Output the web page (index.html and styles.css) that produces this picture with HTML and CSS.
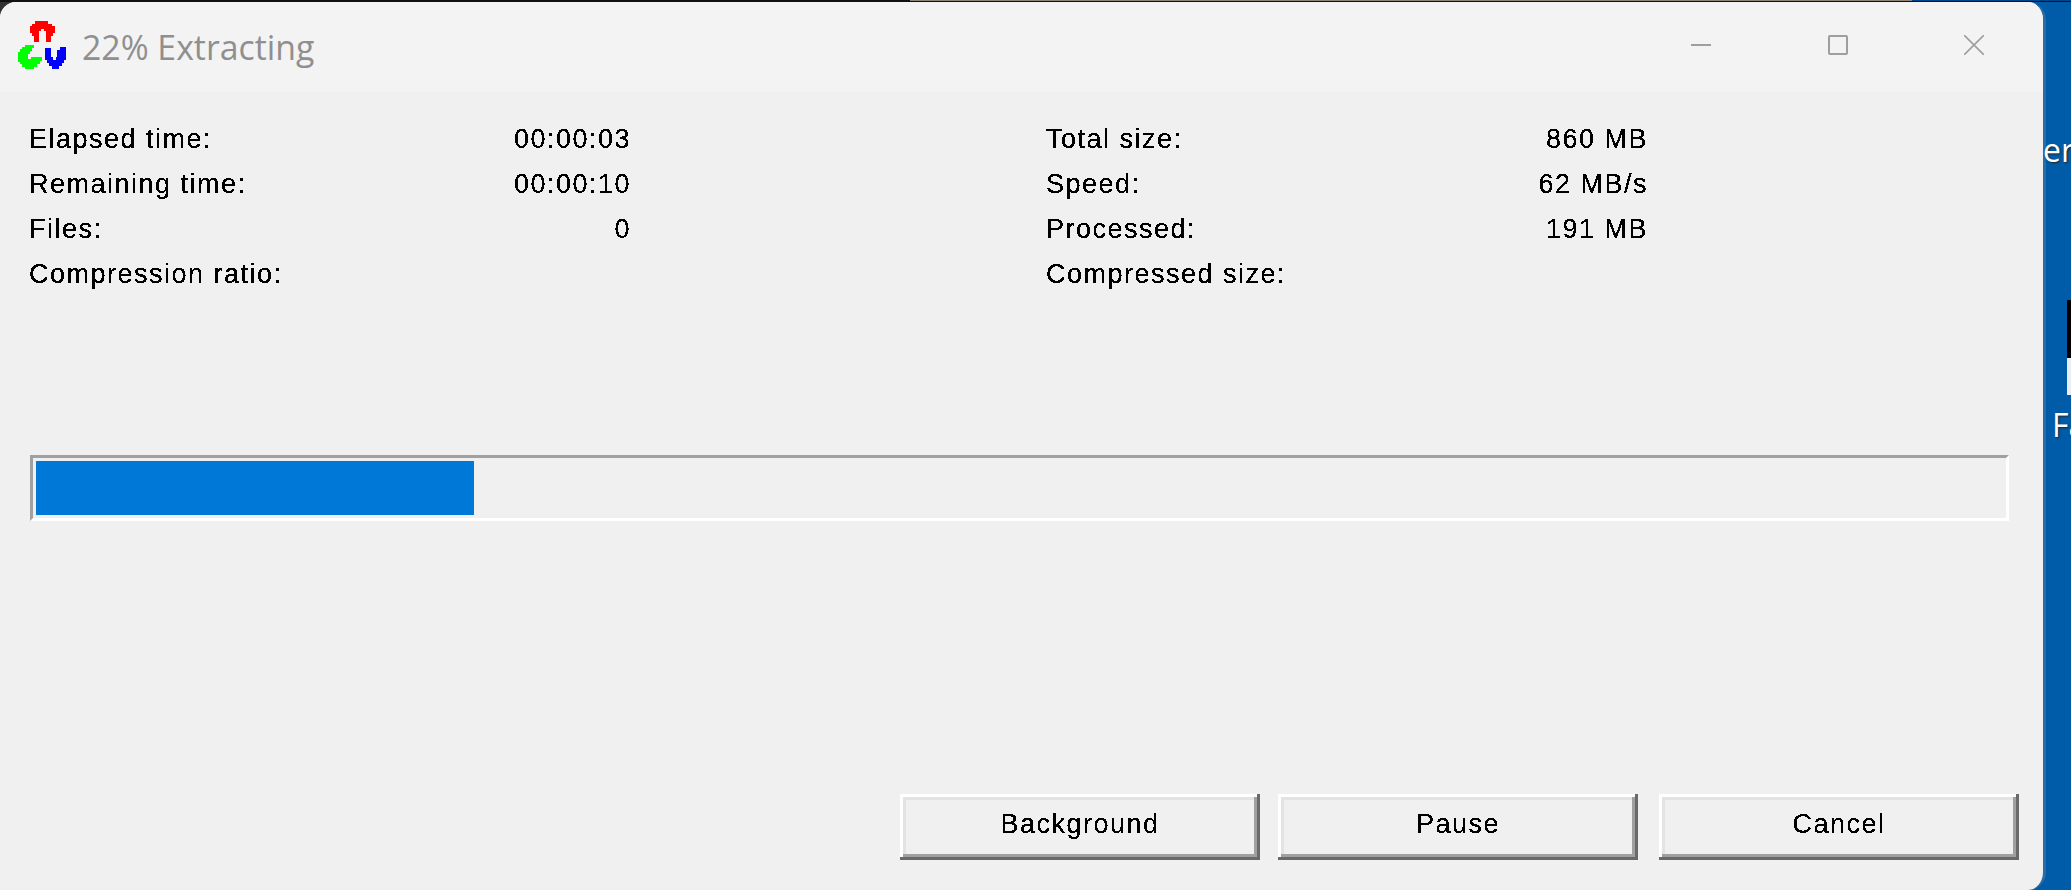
FILE: index.html
```html
<!DOCTYPE html>
<html lang="en">

<head>
  <meta charset="UTF-8">
  <title>22% Extracting</title>
  <link rel="stylesheet" href="styles.css">
</head>

<body>
  <svg class="filter-defs" width="0" height="0" aria-hidden="true">
    <filter id="bitmap-text" color-interpolation-filters="sRGB">
      <feComponentTransfer>
        <feFuncA type="discrete" tableValues="0 1 1" />
      </feComponentTransfer>
    </filter>
  </svg>

  <div class="screen">
    <div class="top-strip"></div>
    <div class="window">
      <header class="titlebar">
        <svg class="app-icon" viewBox="0 0 48 48" shape-rendering="crispEdges" aria-hidden="true">
          <path d="M16 21V15H14V12H12V5H14V3H17V0H30V3H34V5H37V12H35V15H33V21H28V10H26V8H23V10H21V21z" fill="#ff0000" />
          <path d="M7 24H16V27H14V30H12V33H10V38H13V36H24V40H22V43H19V46H16V48H7V46H4V43H2V41H0V31H2V28H4V26H7z" fill="#00ff00" />
          <path d="M27 27H33V36H35V39H38V36H39V29H42V26H48V39H46V42H44V45H41V48H34V45H31V42H29V39H27z" fill="#0000ff" />
        </svg>
        <h1 class="title">22% Extracting</h1>
        <div class="controls">
          <span class="control"><i class="icon-min"></i></span>
          <span class="control"><i class="icon-max"></i></span>
          <span class="control">
            <svg class="icon-close" viewBox="0 0 20 20" aria-hidden="true">
              <path d="M0 0 20 20M20 0 0 20" />
            </svg>
          </span>
        </div>
      </header>

      <main class="content">
        <section class="stats">
          <div class="stat-col">
            <div class="stat"><span class="bm">Elapsed time:</span><span class="bm">00:00:03</span></div>
            <div class="stat"><span class="bm">Remaining time:</span><span class="bm">00:00:10</span></div>
            <div class="stat"><span class="bm">Files:</span><span class="bm">0</span></div>
            <div class="stat"><span class="bm">Compression ratio:</span></div>
          </div>
          <div class="stat-col">
            <div class="stat"><span class="bm">Total size:</span><span class="bm">860 MB</span></div>
            <div class="stat"><span class="bm">Speed:</span><span class="bm">62 MB/s</span></div>
            <div class="stat"><span class="bm">Processed:</span><span class="bm">191 MB</span></div>
            <div class="stat"><span class="bm">Compressed size:</span></div>
          </div>
        </section>

        <div class="progress">
          <div class="progress-fill" style="width: 438px;"></div>
        </div>

        <div class="actions">
          <button class="btn" type="button"><span class="bm">Background</span></button>
          <button class="btn" type="button"><span class="bm">Pause</span></button>
          <button class="btn btn-cancel" type="button"><span class="bm">Cancel</span></button>
        </div>
      </main>
    </div>

    <!-- desktop icons cut off by the screenshot edge -->
    <span class="desk-text desk-er">er</span>
    <span class="desk-text desk-fa">Fa</span>
    <div class="desk-icon"></div>
  </div>
</body>

</html>
```

FILE: styles.css
```css
* {
  box-sizing: border-box;
}

html,
body {
  margin: 0;
  height: 100%;
  overflow: hidden;
}

.filter-defs {
  position: absolute;
}

.screen {
  position: relative;
  width: 2071px;
  height: 890px;
  background: linear-gradient(90deg, #333 0 60px, #005ca8 60px);
}

.top-strip {
  height: 2px;
  background: linear-gradient(90deg, #111 0 910px, #8d8578 910px 1912px, #00458a 1912px);
  border-bottom: 1px solid #111;
}

.window {
  display: flex;
  flex-direction: column;
  width: 2046px;
  height: 888px;
  border-right: 3px solid #2c6ba3;
  border-radius: 0 18px 18px 0;
  border-top-left-radius: 16px;
  background: #f0f0f0;
  overflow: hidden;
  font-family: "Liberation Sans", Arial, sans-serif;
}

.titlebar {
  display: flex;
  align-items: center;
  flex: none;
  height: 90px;
  padding-left: 18px;
  background: #f3f3f3;
}

.app-icon {
  width: 48px;
  height: 48px;
  flex: none;
  margin-bottom: 4px;
}

.title {
  flex: 1;
  margin: 0 0 0 16px;
  font-family: "Open Sans", sans-serif;
  font-size: 33.8px;
  font-weight: 400;
  color: #8f8f8f;
}

.controls {
  display: flex;
}

.control {
  display: flex;
  align-items: center;
  justify-content: center;
  width: 137.5px;
  height: 90px;
  padding-bottom: 4px;
  margin-left: -1px;
}

.icon-min {
  width: 20px;
  height: 2px;
  background: #9e9e9e;
}

.icon-max {
  width: 20px;
  height: 20px;
  border: 2px solid #9e9e9e;
  border-radius: 2px;
}

.icon-close {
  width: 20px;
  height: 20px;
  fill: none;
  stroke: #9e9e9e;
  stroke-width: 1.6;
}

.content {
  display: flex;
  flex-direction: column;
  flex: 1;
  padding: 25px 24px 0 29px;
}

.stats {
  display: grid;
  grid-template-columns: 602px 602px;
  column-gap: 415px;
}

.stat {
  display: flex;
  align-items: center;
  justify-content: space-between;
  height: 45px;
  font-size: 27px;
  color: #000;
}

/* the original uses a non antialiased bitmap font */
.bm {
  filter: url(#bitmap-text);
  letter-spacing: 1.5px;
}

.progress {
  height: 66px;
  margin: 158px 10px 0 1px;
  padding: 3px;
  border: 3px solid;
  border-color: #a0a0a0 #fff #fff #a0a0a0;
  background: #f0f0f0;
}

.progress-fill {
  height: 100%;
  background: #0078d7;
}

.actions {
  display: flex;
  justify-content: flex-end;
  gap: 18px;
  margin-top: 273px;
}

.btn {
  width: 360px;
  height: 66px;
  padding: 0 0 6px;
  border: 0;
  background: #f0f0f0;
  box-shadow:
    inset -3px -3px #696969,
    inset 3px 3px #fff,
    inset -6px -6px #a0a0a0,
    inset 6px 6px #e3e3e3;
  font-family: "Liberation Sans", Arial, sans-serif;
  font-size: 27px;
  color: #000;
}

.btn-cancel {
  margin-left: 3px;
}

.desk-text {
  position: absolute;
  font-family: "Open Sans", sans-serif;
  font-size: 32px;
  color: #fff;
  text-shadow: 1px 1px 2px #222;
}

.desk-er {
  top: 128px;
  left: 2043px;
}

.desk-fa {
  top: 403px;
  left: 2052px;
}

.desk-icon {
  position: absolute;
  top: 300px;
  left: 2067px;
  width: 4px;
  height: 95px;
  background: linear-gradient(#000 0 58px, #e8eef4 58px);
}
```
